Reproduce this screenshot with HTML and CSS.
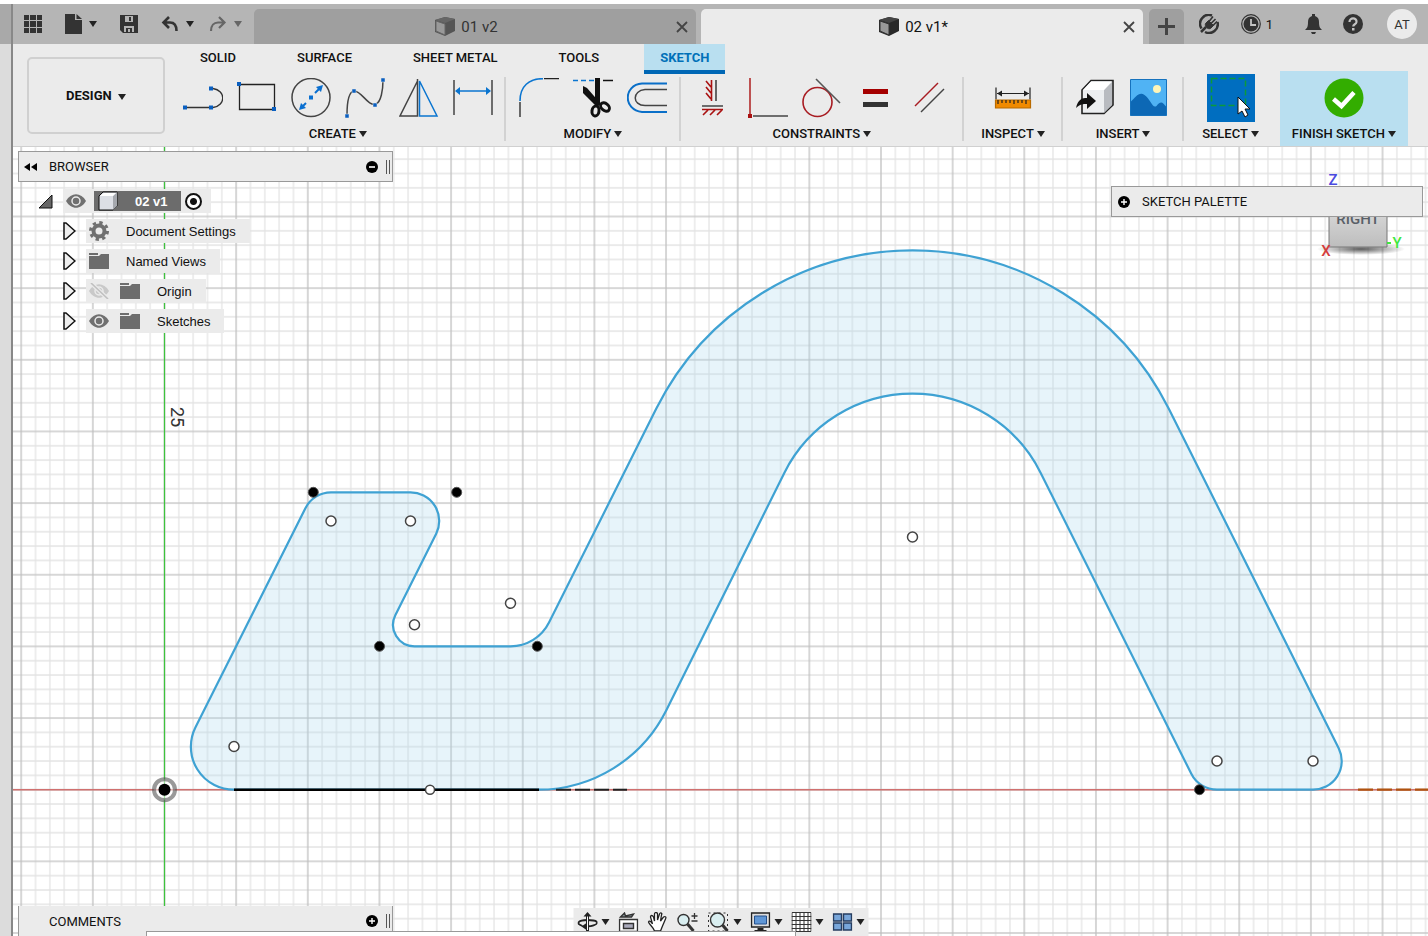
FILE: index.html
```html
<!DOCTYPE html>
<html lang="en">
<head>
    <meta charset="UTF-8">
    <title>02 v1*</title>
    <link rel="stylesheet" href="styles.css">
</head>
<body>
<div class="rail"></div>
<div class="app">
    <header class="topbar">
        <div class="quick">
            <button class="icon-btn" aria-label="Data panel">
                <svg width="18" height="18" viewBox="0 0 18 18" fill="#333"><path d="M0 0h5v5H0zM6 0h6v5H6zM13 0h5v5h-5zM0 6h5v6H0zM6 6h6v6H6zM13 6h5v6h-5zM0 13h5v5H0zM6 13h6v5H6zM13 13h5v5h-5z"/></svg>
            </button>
            <button class="icon-btn quick__file" aria-label="File">
                <svg width="17" height="20" viewBox="0 0 17 20" fill="#333"><path d="M0 0h10v6h7v14H0z"/><path d="M11.500 0l5.500 5h-5.500z"/></svg>
                <span class="caret"></span>
            </button>
            <button class="icon-btn" aria-label="Save">
                <svg width="18" height="18" viewBox="0 0 18 18"><path d="M0 0h18v18H3l-3-3z" fill="#333"/><path d="M5 1h8v6H5zM4 11h10v6H4z" fill="#b4b4b4"/><path d="M9 2h2v4H9zM6 13h6v4H6z" fill="#333"/><path d="M8 14h2v3H8z" fill="#b4b4b4"/></svg>
            </button>
            <button class="icon-btn" aria-label="Undo">
                <svg width="18" height="16" viewBox="0 0 18 16" fill="none" stroke="#333" stroke-width="2.600"><path d="M2 6.500h7c4 0 6.500 3 6.500 8.500M8 1L2.500 6.500 8 12"/></svg>
                <span class="caret"></span>
            </button>
            <button class="icon-btn quick__redo" aria-label="Redo">
                <svg width="18" height="16" viewBox="0 0 18 16" fill="none" stroke="#666" stroke-width="2.200"><path d="M15 6.500H9c-4 0-7 3-7 8.500M10 1l5.500 5.500L10 12"/></svg>
                <span class="caret"></span>
            </button>
        </div>
        <nav class="docs">
            <div class="doc">
                <a class="doc__title" href="#">
                    <svg width="20" height="19" viewBox="0 0 20 19"><path d="M0 3L10 0l10 2v12l-10 5L0 15z" fill="#555"/><path d="M1 4l9 3v11l-9-4z" fill="#999" stroke="#666"/><path d="M0 3L10 0l10 2-10 4z" fill="#666"/></svg>
                    01 v2
                </a>
                <button class="icon-btn" aria-label="Close 01 v2"><svg width="12" height="12" viewBox="0 0 12 12" stroke="#444" stroke-width="1.800"><path d="M1 1l10 10M11 1L1 11"/></svg></button>
            </div>
            <div class="doc doc--active">
                <a class="doc__title" href="#">
                    <svg width="20" height="19" viewBox="0 0 20 19"><path d="M0 3L10 0l10 2v12l-10 5L0 15z" fill="#292929"/><path d="M1 4l9 3v11l-9-4z" fill="#999" stroke="#333"/><path d="M0 3L10 0l10 2-10 4z" fill="#444"/></svg>
                    02 v1*
                </a>
                <button class="icon-btn" aria-label="Close 02 v1"><svg width="12" height="12" viewBox="0 0 12 12" stroke="#444" stroke-width="1.800"><path d="M1 1l10 10M11 1L1 11"/></svg></button>
            </div>
        </nav>
        <button class="new-doc" aria-label="New design"><svg width="17" height="17" viewBox="0 0 17 17" stroke="#444" stroke-width="3"><path d="M8.500 0v17M0 8.500h17"/></svg></button>
        <div class="account">
            <button class="icon-btn" aria-label="Extensions">
                <svg width="20" height="20" viewBox="0 0 20 20" fill="none" stroke="#333"><path d="M13 1.500A8.800 8.800 0 0 0 2.500 14.500" stroke-width="2.500"/><path d="M6 18A8.800 8.800 0 0 0 18.500 8" stroke-width="2.500"/><path d="M2 18l5-5" stroke-width="2.500"/><path d="M6.500 9.500l3-3 5 5-3 3c-3 1-6-2-5-5z" fill="#333"/><path d="M10 7.500l4-5M12 9.500l4.500-4.500M14 11.500l4-4" stroke-width="1.600"/></svg>
            </button>
            <button class="icon-btn account__jobs" aria-label="Job status">
                <svg width="20" height="20" viewBox="0 0 20 20"><circle cx="10" cy="10" r="9.300" fill="none" stroke="#333" stroke-width="1.200"/><circle cx="10" cy="10" r="7.500" fill="#333"/><path d="M10 5v6h5" fill="none" stroke="#c4c4c4" stroke-width="1.800"/></svg>
                1
            </button>
            <button class="icon-btn account__bell" aria-label="Notifications">
                <svg width="17" height="20" viewBox="0 0 17 20" fill="#333"><path d="M7 0h3v2c3 1 4 3 4 6 0 5 1 6 3 8H0c2-2 3-3 3-8 0-3 1-5 4-6zM6 18h5l-1 2H7z"/></svg>
            </button>
            <button class="icon-btn account__help" aria-label="Help">
                <svg width="20" height="20" viewBox="0 0 20 20"><circle cx="10" cy="10" r="10" fill="#333"/><path d="M6.500 8c0-5 7.500-4.500 7 0-.3 2.500-3.300 2-3.300 4.500" fill="none" stroke="#c4c4c4" stroke-width="2.200"/><path d="M9 14h2.500v2.500H9z" fill="#c4c4c4"/></svg>
            </button>
            <button class="avatar">AT</button>
        </div>
    </header>

    <div class="ribbon">
        <button class="workspace-btn">DESIGN <span class="caret"></span></button>
        <div class="ribbon__main">
            <nav class="ribbon__tabs">
                <a href="#">SOLID</a>
                <a href="#">SURFACE</a>
                <a href="#">SHEET METAL</a>
                <a href="#">TOOLS</a>
                <a href="#" class="is-active">SKETCH</a>
            </nav>
            <div class="ribbon__groups">
                <section class="group">
                    <div class="group__tools">
                        <button class="tool" aria-label="Line"><svg viewBox="0 0 40 40" fill="none" stroke="#333" stroke-width="1.300"><path d="M3 29.500h23M30 10.500c13 2 13 17 0 19"/><path d="M0 27.500h4v4H0zM26 27.500h4v4h-4zM26 8.500h4v4h-4z" fill="#0a5fc0" stroke="none"/></svg></button>
                        <button class="tool" aria-label="Rectangle"><svg viewBox="0 0 40 40" fill="none" stroke="#222" stroke-width="1.300"><path d="M2.500 6.500h35v25h-35z"/><path d="M0 4h4v4H0zM35 29h4v4h-4z" fill="#0a5fc0" stroke="none"/></svg></button>
                        <button class="tool" aria-label="Circle"><svg viewBox="0 0 40 40" fill="none" stroke="#444" stroke-width="1.500"><circle cx="20" cy="19.500" r="19"/><path d="M11 29l4-4M24 15l5-5" stroke="#0a6fd0" stroke-width="2"/><path d="M32 7l-2 7-5-5zM8 32l2-7 5 5zM18 17.500h4v4h-4z" fill="#0a6fd0" stroke="none"/></svg></button>
                        <button class="tool" aria-label="Spline"><svg viewBox="0 0 40 40" fill="none" stroke="#444" stroke-width="1.500"><path d="M2 37c0-10 1-23 7-24 7-1 14 16 22 13 5-2 7-14 7-24"/><path d="M0 36h4v4H0zM7 11h4v4H7zM28 25h4v4h-4zM36 0h4v4h-4z" fill="#0a5fc0" stroke="#ebebeb" stroke-width=".5"/></svg></button>
                        <button class="tool" aria-label="Mirror"><svg viewBox="0 0 40 40" fill="none" stroke="#444" stroke-width="1.500"><path d="M18.500 3v35H1zM18.500 1v3"/><path d="M20.500 3v35H38z" stroke="#0a75d0"/></svg></button>
                        <button class="tool" aria-label="Dimension"><svg viewBox="0 0 40 40" fill="none" stroke="#444" stroke-width="1.500"><path d="M1 2v35M39 2v35"/><path d="M3 13h34" stroke="#0a75d0"/><path d="M2 13l5-4v8zM38 13l-5-4v8z" fill="#0a75d0" stroke="none"/></svg></button>
                    </div>
                    <button class="group__label">CREATE <span class="caret"></span></button>
                </section>
                <section class="group">
                    <div class="group__tools">
                        <button class="tool" aria-label="Fillet"><svg viewBox="0 0 40 40" fill="none" stroke="#222" stroke-width="1.300"><path d="M1 24v15M25 .7h15"/><path d="M1 23C1 8 10 .7 24 .7" stroke="#0a75d0" stroke-width="1.600"/></svg></button>
                        <button class="tool" aria-label="Trim"><svg viewBox="0 0 40 40" fill="none" stroke="#111"><path d="M0 2.500h21" stroke="#0a75d0" stroke-width="1.500" stroke-dasharray="5 3"/><path d="M30 2.500h10" stroke-width="1.500"/><path d="M22 0h5v25h-5zM10 8l4 2 14 16-4 3L10 15z" fill="#111" stroke="none"/><ellipse cx="22.500" cy="33" rx="3.500" ry="5" stroke-width="3" transform="rotate(8 22.500 33)"/><ellipse cx="32" cy="29" rx="3.500" ry="5" stroke-width="3" transform="rotate(-50 32 29)"/></svg></button>
                        <button class="tool" aria-label="Offset"><svg viewBox="0 0 40 40" fill="none" stroke="#444" stroke-width="1.500"><path d="M40 5.500H15C-4 7-4 32 15 34h25" stroke="#0a6fc8" stroke-width="2"/><path d="M40 11.500H18c-13 1-13 16 0 16h22"/></svg></button>
                    </div>
                    <button class="group__label">MODIFY <span class="caret"></span></button>
                </section>
                <section class="group">
                    <div class="group__tools">
                        <button class="tool" aria-label="Horizontal/Vertical"><svg viewBox="0 0 40 40" fill="none" stroke="#a11" stroke-width="1.600"><path d="M17.500 2v21M12 3l5 6M12 9l5 6M12 15l5 6M8 31.500h21M14 32l-5 5M21 32l-5 5M28 32l-5 5"/><path d="M22 2v21M8 28h21" stroke="#444"/></svg></button>
                        <button class="tool" aria-label="Coincident"><svg viewBox="0 0 40 40" fill="none" stroke-width="1.400"><path d="M2 0v36" stroke="#a11"/><path d="M5 38h35" stroke="#444"/><path d="M0 36h4v4H0z" fill="#a11"/></svg></button>
                        <button class="tool" aria-label="Tangent"><svg viewBox="0 0 40 40" fill="none" stroke-width="1.600"><circle cx="15.500" cy="24" r="14.500" stroke="#a81c22"/><path d="M14 1l24 24" stroke="#555"/></svg></button>
                        <button class="tool" aria-label="Equal"><svg viewBox="0 0 40 40"><path d="M7 11h25v5H7z" fill="#a50000"/><path d="M7 24h25v5H7z" fill="#333"/></svg></button>
                        <button class="tool" aria-label="Parallel"><svg viewBox="0 0 40 40" fill="none" stroke-width="1.500"><path d="M5 28L28 5" stroke="#a81c22"/><path d="M11 34l23-23" stroke="#444"/></svg></button>
                    </div>
                    <button class="group__label">CONSTRAINTS <span class="caret"></span></button>
                </section>
                <section class="group group--single">
                    <div class="group__tools">
                        <button class="tool" aria-label="Measure"><svg viewBox="0 0 40 40" fill="none" stroke="#222" stroke-width="1.200"><path d="M3 9.500v12M37 9.500v12M4 15.500h32"/><path d="M4 15.500l5-3v6zM36 15.500l-5-3v6z" fill="#222" stroke="none"/><path d="M2.500 22h35v8h-35z" fill="#f08a00" stroke="#b86a00"/><path d="M5 22v4M9 22v3M13 22v3M17 22v3M21 22v4M25 22v3M29 22v3M33 22v4"/></svg></button>
                    </div>
                    <button class="group__label">INSPECT <span class="caret"></span></button>
                </section>
                <section class="group">
                    <div class="group__tools">
                        <button class="tool" aria-label="Insert component"><svg viewBox="0 0 40 40"><path d="M6 12L15 2.500h22V27L28 35.500H6z" fill="#eceef0" stroke="#222" stroke-width="1.600"/><path d="M28 12l8-8v23l-8 8z" fill="#b8bbc0"/><path d="M7 12L15 3.500h20.500L28 12z" fill="#fff"/><path d="M0 30c2-9 6-10 11-10v-5l9 8-9 8v-5c-4 0-7 0-11 4z" fill="#111"/></svg></button>
                        <button class="tool" aria-label="Insert image"><svg viewBox="0 0 40 40"><path d="M.5 1.500h36v36h-36z" fill="#50b3f4"/><path d="M.5 24c5-5 9-11 14-7 6 4 8 14 12 11 5-6 6-3 10 1v8.500h-36z" fill="#0d68b5"/><circle cx="27" cy="11" r="4" fill="#fff5b8"/><path d="M.5 1.500h36v36h-36z" fill="none" stroke="#1672bd"/></svg></button>
                    </div>
                    <button class="group__label">INSERT <span class="caret"></span></button>
                </section>
                <section class="group group--last">
                    <div class="group__tools">
                        <button class="tool tool--on" aria-label="Select"><svg viewBox="0 0 48 48"><path d="M4.500 4.500h34v27h-34z" fill="none" stroke="#0c9a3a" stroke-width="1.500" stroke-dasharray="6 3"/><path d="M31 23v17l4-3 3 6 3-2-3-6h5z" fill="#fff" stroke="#111"/></svg></button>
                    </div>
                    <button class="group__label">SELECT <span class="caret"></span></button>
                </section>
                <section class="group group--finish">
                    <div class="group__tools">
                        <button class="tool" aria-label="Finish sketch"><svg viewBox="0 0 40 40"><circle cx="20" cy="20" r="19.500" fill="#33ad00"/><path d="M9.500 21l8 7L30 14.500" fill="none" stroke="#fff" stroke-width="4.500"/></svg></button>
                    </div>
                    <button class="group__label">FINISH SKETCH <span class="caret"></span></button>
                </section>
            </div>
        </div>
    </div>

    <main class="canvas">
        <svg class="sketch">
            <defs>
                <pattern id="minor" x="164.500" y="789.700" width="14.330" height="14.330" patternUnits="userSpaceOnUse">
                    <path d="M0 0v14.330M0 0h14.330M14.330 0v14.330M0 14.330h14.330" stroke="#000" stroke-opacity=".11" stroke-width="1.200" fill="none"/>
                </pattern>
                <pattern id="major" x="164.500" y="789.700" width="71.650" height="71.650" patternUnits="userSpaceOnUse">
                    <path d="M0 0v71.650M0 0h71.650M71.650 0v71.650M0 71.650h71.650" stroke="#000" stroke-opacity=".16" stroke-width="1.200" fill="none"/>
                </pattern>
            </defs>
            <g transform="translate(-13 -147)">
                <rect width="4000" height="3000" fill="url(#minor)"/>
                <rect width="4000" height="3000" fill="url(#major)"/>
                <path d="M0 789.700h4000" stroke="#d0706f" stroke-width="1.500"/>
                <path d="M164.500 0v3000" stroke="#3cc43c" stroke-width="1.200"/>
                <path class="profile" d="M234 789.700A43 43 0 0 1 195.500 727.300L305.400 508.200A28.700 28.700 0 0 1 331 492.300H410.500A28.700 28.700 0 0 1 436.200 533.800L395.300 615.200A21.500 21.500 0 0 0 414.500 646.300H510.500A43 43 0 0 0 549 622.500L656.200 408.800A286.600 286.600 0 0 1 1168.800 408.800L1338.700 748.200A28.700 28.700 0 0 1 1313 789.700H1217A28.700 28.700 0 0 1 1191.300 773.800L1040.700 472.900A143.300 143.300 0 0 0 784.300 472.900L666.200 710.500A143.300 143.300 0 0 1 538 789.700Z"/>
                <path d="M234 789.700h305" stroke="#000" stroke-width="2.500"/>
                <path d="M556 789.700h71" stroke="#222" stroke-width="2" stroke-dasharray="15 4"/>
                <path d="M1358 789.700h100" stroke="#b0520f" stroke-width="2.200" stroke-dasharray="15 4"/>
                <g class="centers">
                    <circle cx="234" cy="746.500" r="5"/>
                    <circle cx="331" cy="521" r="5"/>
                    <circle cx="410.500" cy="521" r="5"/>
                    <circle cx="414.500" cy="624.800" r="5"/>
                    <circle cx="510.500" cy="603.300" r="5"/>
                    <circle cx="912.500" cy="537" r="5"/>
                    <circle cx="1217" cy="761" r="5"/>
                    <circle cx="1313" cy="761" r="5"/>
                    <circle cx="430" cy="789.700" r="4.500"/>
                </g>
                <g class="points">
                    <circle cx="313.300" cy="492.300" r="5"/>
                    <circle cx="456.700" cy="492.300" r="5"/>
                    <circle cx="379.500" cy="646.300" r="5"/>
                    <circle cx="537.300" cy="646.300" r="5"/>
                    <circle cx="1199.500" cy="789.700" r="5"/>
                </g>
                <circle cx="164.500" cy="789.700" r="10.500" fill="#fff" fill-opacity=".5" stroke="#555" stroke-opacity=".6" stroke-width="4"/>
                <circle cx="164.500" cy="789.700" r="6" fill="#000"/>
                <text class="ruler" transform="translate(171 407) rotate(90)">25</text>
            </g>
        </svg>

        <svg class="viewcube" width="106" height="90" viewBox="-6 0 106 90">
            <defs><linearGradient id="face" x2="0" y2="1"><stop offset="0" stop-color="#e6e6e6"/><stop offset="1" stop-color="#bdbdbd"/></linearGradient>
            <radialGradient id="shade"><stop offset="0" stop-color="#333" stop-opacity=".8"/><stop offset="1" stop-color="#333" stop-opacity="0"/></radialGradient></defs>
            <ellipse cx="38" cy="78" rx="44" ry="6" fill="url(#shade)"/>
            <path d="M6 20h58v56H6z" fill="url(#face)" stroke="#777"/>
            <text x="35" y="53" fill="#596068">RIGHT</text>
            <text x="10" y="14" fill="#4a4ae0">Z</text>
            <text x="3" y="85" fill="#d43c3c">X</text>
            <text x="74" y="77" fill="#3ee83e">Y</text>
            <path d="M64 72h4" stroke="#3ee83e" stroke-width="2"/>
        </svg>

        <aside class="browser">
            <div class="panel">
                <button class="icon-btn" aria-label="Collapse"><svg width="13" height="8" viewBox="0 0 13 8"><path d="M6 0v8L0 4zM13 0v8L7 4z"/></svg></button>
                <span class="panel__title">BROWSER</span>
                <button class="icon-btn" aria-label="Hide browser"><svg width="12" height="12" viewBox="0 0 12 12"><circle cx="6" cy="6" r="6"/><path d="M3 6h6" stroke="#fff" stroke-width="1.600"/></svg></button>
                <span class="grip"></span>
            </div>
            <ul class="tree">
                <li class="tree__root">
                    <svg width="15" height="15" viewBox="0 0 15 15"><path d="M14 1v13H1z" fill="#666" stroke="#111"/></svg>
                    <div class="node">
                        <svg class="eye" width="20" height="14" viewBox="0 0 20 14"><path d="M0 7c5-9 15-9 20 0-5 9-15 9-20 0z" fill="#707070"/><circle cx="10" cy="7" r="4" fill="none" stroke="#ebebeb" stroke-width="1.500"/></svg>
                        <span class="node__doc">
                            <svg width="20" height="20" viewBox="0 0 20 20"><path d="M1 5l4-4h14v14l-4 4H1z" fill="#dcdfe5" stroke="#111"/><path d="M15 5l4-4v14l-4 4z" fill="#a5a8ae"/><path d="M2 5l4-3h12l-3 3z" fill="#fff"/></svg>
                            02 v1
                        </span>
                        <input class="node__radio" type="radio" checked aria-label="Activate 02 v1">
                    </div>
                </li>
                <li>
                    <svg width="13" height="18" viewBox="0 0 13 18"><path d="M1 1v16h2l9-8-9-8z" fill="#eee" stroke="#111" stroke-width="1.500"/></svg>
                    <div class="node">
                        <svg width="20" height="20" viewBox="0 0 20 20" fill="none" stroke="#707070"><circle cx="10" cy="10" r="5.500" stroke-width="4"/><circle cx="10" cy="10" r="8.500" stroke-width="3" stroke-dasharray="3.340 3.340"/></svg>
                        <span>Document Settings</span>
                    </div>
                </li>
                <li>
                    <svg width="13" height="18" viewBox="0 0 13 18"><path d="M1 1v16h2l9-8-9-8z" fill="#eee" stroke="#111" stroke-width="1.500"/></svg>
                    <div class="node">
                        <svg width="20" height="16" viewBox="0 0 20 16" fill="#6c6c6c"><path d="M0 0h9v2H0zM0 3h10l2-2h8v15H0z"/></svg>
                        <span>Named Views</span>
                    </div>
                </li>
                <li>
                    <svg width="13" height="18" viewBox="0 0 13 18"><path d="M1 1v16h2l9-8-9-8z" fill="#eee" stroke="#111" stroke-width="1.500"/></svg>
                    <div class="node">
                        <svg width="20" height="16" viewBox="0 0 20 16"><path d="M0 8c5-9 15-9 20 0-5 9-15 9-20 0z" fill="#c9c9c9"/><circle cx="10" cy="8" r="4" fill="none" stroke="#ebebeb" stroke-width="1.500"/><path d="M2 0l17 16" stroke="#ebebeb" stroke-width="4"/><path d="M2 0l17 16" stroke="#c0c0c0" stroke-width="1.600"/></svg>
                        <svg class="folder" width="20" height="16" viewBox="0 0 20 16" fill="#6c6c6c"><path d="M0 0h9v2H0zM0 3h10l2-2h8v15H0z"/></svg>
                        <span>Origin</span>
                    </div>
                </li>
                <li>
                    <svg width="13" height="18" viewBox="0 0 13 18"><path d="M1 1v16h2l9-8-9-8z" fill="#eee" stroke="#111" stroke-width="1.500"/></svg>
                    <div class="node">
                        <svg width="20" height="14" viewBox="0 0 20 14"><path d="M0 7c5-9 15-9 20 0-5 9-15 9-20 0z" fill="#707070"/><circle cx="10" cy="7" r="4" fill="none" stroke="#ebebeb" stroke-width="1.500"/></svg>
                        <svg class="folder" width="20" height="16" viewBox="0 0 20 16" fill="#6c6c6c"><path d="M0 0h9v2H0zM0 3h10l2-2h8v15H0z"/></svg>
                        <span>Sketches</span>
                    </div>
                </li>
            </ul>
        </aside>

        <div class="panel palette">
            <button class="icon-btn" aria-label="Show palette"><svg width="12" height="12" viewBox="0 0 12 12"><circle cx="6" cy="6" r="6"/><path d="M3 6h6M6 3v6" stroke="#fff" stroke-width="1.400"/></svg></button>
            <span class="panel__title">SKETCH PALETTE</span>
        </div>

        <div class="panel comments">
            <span class="panel__title">COMMENTS</span>
            <button class="icon-btn" aria-label="Show comments"><svg width="12" height="12" viewBox="0 0 12 12"><circle cx="6" cy="6" r="6"/><path d="M3 6h6M6 3v6" stroke="#fff" stroke-width="1.400"/></svg></button>
            <span class="grip"></span>
        </div>

        <div class="navbar">
            <button class="icon-btn" aria-label="Orbit"><svg width="20" height="20" viewBox="0 0 20 20" fill="none" stroke="#222" stroke-width="1.800"><path d="M5 14C-2 12 0 8 10 8s12 3 7 5c-2 1-5 1.500-9 1.500"/><path d="M10 3v16" stroke-width="3"/><path d="M10 3v15" stroke="#fff" stroke-width="1"/><path d="M6 4.500L10 0l4 4.500zM9 11v7l-5-3.500z" fill="#222" stroke="none"/></svg><span class="caret"></span></button>
            <button class="icon-btn" aria-label="Look at"><svg width="20" height="20" viewBox="0 0 20 20" fill="none" stroke="#333" stroke-width="1.400"><path d="M1 7.500h18v12H1z" fill="#fff"/><path d="M5 11.500h10v5H5z" fill="#aab"/><path d="M2 5l4-4 1 3 8-2-2 3z" fill="#8a9aa0"/></svg></button>
            <button class="icon-btn" aria-label="Pan"><svg width="20" height="20" viewBox="0 0 20 20"><path d="M7 19c-1-4-5-6-6-9 1-2 3 0 4 2L3 5c0-2 2-2 3 0l1 4V2c0-2 3-2 3 0v6l2-6c1-2 3-1 2 1l-1 6 3-4c2-1 3 0 2 2l-3 7-2 5z" fill="#fff" stroke="#222" stroke-width="1.300"/></svg></button>
            <button class="icon-btn" aria-label="Zoom"><svg width="22" height="20" viewBox="0 0 22 20" fill="none" stroke="#333"><circle cx="7" cy="8" r="5.500" fill="#d9eef0" stroke-width="1.400"/><path d="M11 12l6 7" stroke-width="3"/><path d="M18 1v6M15 4h6M15 9h6" stroke-width="1.300"/></svg></button>
            <button class="icon-btn" aria-label="Fit"><svg width="22" height="20" viewBox="0 0 22 20" fill="none" stroke="#333"><path d="M1 1h19v18H1z" stroke-dasharray="2 3"/><circle cx="10" cy="8" r="7" fill="#d9eef0" stroke-width="1.400"/><path d="M15 13l5 6" stroke-width="3"/></svg><span class="caret"></span></button>
            <button class="icon-btn" aria-label="Display settings"><svg width="20" height="20" viewBox="0 0 20 20"><path d="M1 1h18v14H1z" fill="#ddd" stroke="#222" stroke-width="1.400"/><path d="M4 4h12v8H4z" fill="#5f96d5" stroke="#244f8a"/><path d="M7 16h6v2h3v1H4v-1h3z" fill="#222"/></svg><span class="caret"></span></button>
            <button class="icon-btn" aria-label="Grid and snaps"><svg width="20" height="20" viewBox="0 0 20 20" fill="#fff" stroke="#333"><path d="M.5.500h19v19H.5zM4.500 0v20M8.500 0v20M12.500 0v20M16.500 0v20M0 4.500h20M0 8.500h20M0 12.500h20M0 16.500h20"/></svg><span class="caret"></span></button>
            <button class="icon-btn" aria-label="Viewports"><svg width="20" height="18" viewBox="0 0 20 18" fill="#78a6da" stroke="#263d60" stroke-width="1.400"><path d="M1 1h8v7H1zM11 1h8v7h-8zM1 10h8v7H1zM11 10h8v7h-8z"/></svg><span class="caret"></span></button>
        </div>
        <div class="tray"></div>
    </main>
</div>
</body>
</html>
```
FILE: styles.css
```css
* {
    box-sizing: border-box;
}

body, html {
    height: 100%;
    margin: 0;
}

body {
    display: flex;
    padding-top: 4px;
    overflow: hidden;
    background-color: #fff;
    color: #111;
    font-family: Roboto, "Liberation Sans", sans-serif;
    font-size: 13px;
}

button {
    padding: 0;
    border: none;
    background: none;
    color: inherit;
    font: inherit;
    cursor: pointer;
}

a {
    color: inherit;
    text-decoration: none;
}

svg {
    display: block;
    flex: none;
}

.icon-btn {
    display: flex;
    align-items: center;
    gap: 8px;
}

.caret {
    display: inline-block;
    border: 4px solid transparent;
    border-top: 6px solid #222;
    border-bottom: none;
    vertical-align: middle;
}

.rail {
    flex: none;
    width: 13px;
    border-right: 2px solid #888;
    background: linear-gradient(#a9a9a9 40px, #dcdcdc 40px);
}

.app {
    flex: 1;
    min-width: 0;
    display: flex;
    flex-direction: column;
}

/* top bar */
.topbar {
    display: flex;
    height: 40px;
    background-color: #b5b5b5;
}

.quick {
    display: flex;
    align-items: center;
    gap: 23px;
    width: 241px;
    padding-left: 11px;
}

.quick .icon-btn {
    gap: 7px;
}

.quick__redo {
    margin-left: -8px;
}

.quick__redo .caret {
    border-top-color: #666;
}

.docs {
    flex: 1;
    display: flex;
    gap: 5px;
    padding-top: 5px;
}

.doc {
    flex: 1;
    display: flex;
    align-items: center;
    padding-right: 8px;
    border-radius: 5px 5px 0 0;
    background-color: #9f9f9f;
    color: #333;
}

.doc--active {
    background-color: #ebebeb;
    color: #111;
}

.doc__title {
    flex: 1;
    display: flex;
    align-items: center;
    justify-content: center;
    gap: 6px;
    padding-left: 3px;
    font-size: 15px;
}

.new-doc {
    display: flex;
    align-items: center;
    justify-content: center;
    width: 35px;
    margin: 5px 0 0 6px;
    border-radius: 5px 5px 0 0;
    background-color: #9f9f9f;
}

.account {
    display: flex;
    align-items: center;
    justify-content: space-between;
    width: 244px;
    padding: 0 11px 0 15px;
}

.account__jobs {
    gap: 5px;
    margin-right: 10px;
    font-size: 13px;
}

.avatar {
    width: 30px;
    height: 30px;
    margin-left: 2px;
    border-radius: 50%;
    background-color: #ebebeb;
    color: #333;
}

/* ribbon */
.ribbon {
    display: flex;
    height: 103px;
    border-bottom: 1px solid #d0d0d0;
    background-color: #ebebeb;
}

.workspace-btn {
    width: 138px;
    height: 77px;
    margin: 13px 0 0 14px;
    border: 2px solid #d0d0d0;
    border-radius: 5px;
    font-weight: bold;
}

.workspace-btn .caret {
    margin-left: 3px;
}

.ribbon__main {
    flex: 1;
}

.ribbon__tabs {
    display: flex;
    height: 30px;
    padding-left: 19px;
    line-height: 28px;
    font-weight: 500;
}

.ribbon__tabs a {
    padding: 0 16px;
    margin-right: 29px;
}

.ribbon__tabs .is-active {
    margin: 0;
    border-bottom: 4px solid #0067b5;
    background-color: #b9dff0;
    color: #0070b8;
    font-weight: bold;
}

.ribbon__groups {
    display: flex;
    height: 72px;
}

.group {
    position: relative;
    display: flex;
    flex-direction: column;
    align-items: center;
    padding: 4px 14px 0 13px;
}

.group:first-child {
    padding: 4px 13px 0 18px;
}

/* divider between groups */
.group::after {
    content: "";
    position: absolute;
    top: 3px;
    right: 0;
    bottom: 5px;
    width: 2px;
    background-color: #d2d2d2;
}

.group__tools {
    display: flex;
    align-items: center;
    gap: 14px;
    height: 40px;
}

.group__label {
    height: 28px;
    margin-top: 2px;
    font-weight: 500;
    white-space: nowrap;
}

.tool {
    width: 40px;
    height: 40px;
}

.tool--on {
    width: 48px;
    height: 48px;
    background-color: #006ec0;
}

.group--single {
    width: 99px;
}

.group--last {
    width: 96px;
    padding: 4px 3px 0 0;
}

.group--last::after,
.group--finish::after {
    display: none;
}

.group--finish {
    width: 128px;
    margin-top: -3px;
    padding: 7px 0 0;
    background-color: #b9dff0;
}

/* drawing area */
.canvas {
    flex: 1;
    position: relative;
    overflow: hidden;
}

.sketch {
    position: absolute;
    width: 100%;
    height: 100%;
}

.profile {
    fill: #aad7ee;
    fill-opacity: 0.28;
    stroke: #3fa2d3;
    stroke-width: 2.2;
}

.centers circle {
    fill: #fff;
    stroke: #444;
    stroke-width: 1.5;
}

.points circle {
    fill: #000;
    stroke: #555;
    stroke-width: 1;
}

.ruler {
    fill: #333;
    font-size: 18px;
}

.viewcube {
    position: absolute;
    top: 24px;
    right: 5px;
    font-size: 15px;
    font-weight: 500;
}

.viewcube text {
    text-anchor: middle;
}

.panel {
    display: flex;
    align-items: center;
    height: 31px;
    padding: 0 2px 0 5px;
    border: 1px solid #999;
    background-color: #ebebeb;
}

.panel__title {
    flex: 1;
    padding-left: 12px;
    font-size: 13px;
}

.grip {
    width: 4px;
    height: 14px;
    margin-left: 8px;
    border: 1px solid #555;
    border-width: 0 1px;
}

.browser {
    position: absolute;
    top: 4px;
    left: 5px;
    width: 375px;
}

.tree {
    margin: 0;
    padding: 4px 0 0 45px;
    list-style: none;
}

.tree li {
    display: flex;
    align-items: center;
    gap: 10px;
    height: 30px;
}

.tree .tree__root {
    margin-left: -25px;
}

.node {
    display: flex;
    align-items: center;
    height: 24px;
    padding: 0 14px 0 3px;
    background-color: #ebebeb;
    font-family: "Liberation Sans", sans-serif;
    font-size: 13px;
}

.node span {
    padding-left: 17px;
}

.folder {
    margin-left: 11px;
}

.tree__root .node {
    padding-right: 9px;
}

.node .node__doc {
    display: flex;
    align-items: center;
    gap: 17px;
    height: 20px;
    margin: 0 4px 0 8px;
    padding: 0 13px 0 4px;
    background-color: #6c6c6c;
    color: #fff;
    font-weight: bold;
}

.node__radio {
    appearance: none;
    width: 17px;
    height: 17px;
    margin: 0;
    border: 2px solid #111;
    border-radius: 50%;
    background: radial-gradient(#111 3px, #fff 4px);
}

.palette {
    position: absolute;
    top: 39px;
    right: 5px;
    width: 312px;
    padding-left: 6px;
}

.comments {
    position: absolute;
    bottom: -1px;
    left: 5px;
    width: 375px;
    border-top: none;
}

.comments .panel__title {
    padding-left: 25px;
}

.navbar {
    position: absolute;
    bottom: 0;
    left: 50%;
    display: flex;
    align-items: center;
    gap: 9px;
    height: 28px;
    padding: 0 4px;
    background-color: #ebebeb;
    transform: translateX(-50%);
}

.navbar .icon-btn {
    gap: 4px;
}

.tray {
    position: absolute;
    bottom: 0;
    left: 133px;
    width: 650px;
    height: 5px;
    border: 1px solid #999;
    border-bottom: none;
    background-color: #fff;
}
```
